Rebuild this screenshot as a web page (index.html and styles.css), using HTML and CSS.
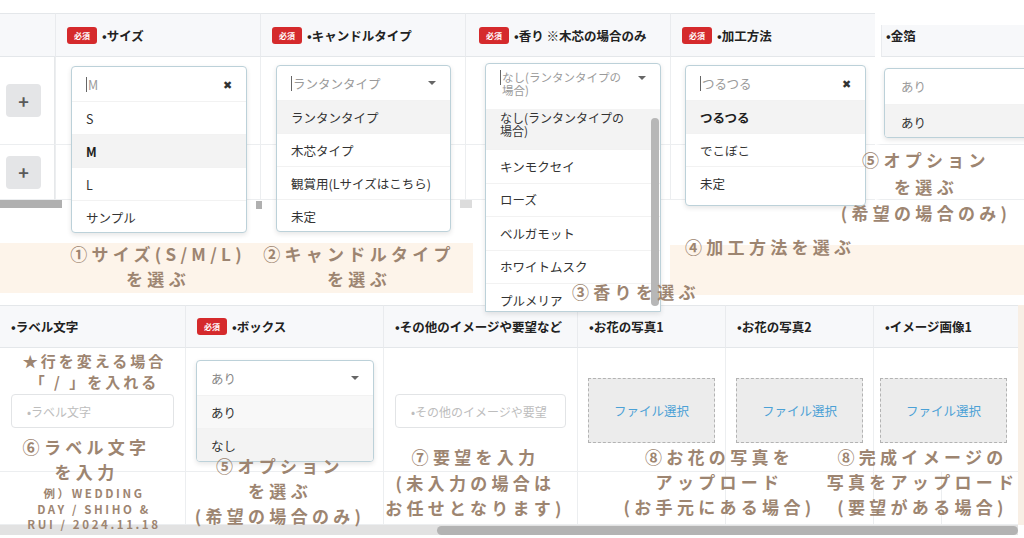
FILE: index.html
```html
<!DOCTYPE html>
<html lang="ja">
<head>
<meta charset="utf-8">
<link rel="stylesheet" href="styles.css">
</head>
<body>
<div class="canvas">
  <section class="top">
    <div class="tgrid">
      <div class="hc"></div>
      <div class="hc"><span class="req">必須</span>•サイズ</div>
      <div class="hc"><span class="req">必須</span>•キャンドルタイプ</div>
      <div class="hc hc3"><span class="req">必須</span>•香り ※木芯の場合のみ</div>
      <div class="hc"><span class="req">必須</span>•加工方法</div>
      <div class="hc hc5">•金箔</div>

      <div class="bc c0"><span class="plus">+</span></div>
      <div class="bc">
        <div class="dd dd1">
          <div class="dd-in"><i class="cur"></i>M<span class="clr">✖</span></div>
          <div class="opt">S</div>
          <div class="opt hl b">M</div>
          <div class="opt">L</div>
          <div class="opt">サンプル</div>
        </div>
      </div>
      <div class="bc">
        <div class="dd dd2">
          <div class="dd-in"><i class="cur"></i>ランタンタイプ<span class="caret"></span></div>
          <div class="opt hl">ランタンタイプ</div>
          <div class="opt">木芯タイプ</div>
          <div class="opt">観賞用(Lサイズはこちら)</div>
          <div class="opt">未定</div>
        </div>
      </div>
      <div class="bc">
        <div class="dd dd3">
          <div class="dd-in two"><i class="cur"></i><span class="tl">なし(ランタンタイプの<br>場合)</span><span class="caret"></span></div>
          <div class="list">
            <div class="opt hl two"><span class="tl">なし(ランタンタイプの<br>場合)</span></div>
            <div class="opt">キンモクセイ</div>
            <div class="opt">ローズ</div>
            <div class="opt">ベルガモット</div>
            <div class="opt">ホワイトムスク</div>
            <div class="opt">プルメリア</div>
            <span class="thumb"></span>
          </div>
        </div>
      </div>
      <div class="bc">
        <div class="dd dd4">
          <div class="dd-in"><i class="cur"></i>つるつる<span class="clr">✖</span></div>
          <div class="opt hl b">つるつる</div>
          <div class="opt">でこぼこ</div>
          <div class="opt">未定</div>
        </div>
      </div>
      <div class="bc c5">
        <div class="dd dd5">
          <div class="dd-in">あり</div>
          <div class="opt hl">あり</div>
        </div>
      </div>

      <div class="bc c0"><span class="plus">+</span></div>
      <div class="bc"></div>
      <div class="bc"></div>
      <div class="bc"></div>
      <div class="bc"></div>
      <div class="bc c5"></div>
    </div>
    <div class="sbar">
      <span class="sb sb1"></span>
      <span class="sb sb2"></span>
      <span class="sb sb3"></span>
    </div>
  </section>

  <section class="gap">
    <div class="band band1">
      <div class="note nA">①サイズ(S/M/L)<br>を選ぶ</div>
      <div class="note nB">②キャンドルタイプ<br>を選ぶ</div>
    </div>
    <div class="band band2">
      <div class="note n4">④加工方法を選ぶ</div>
    </div>
  </section>

  <section class="bottom">
    <div class="bgrid">
      <div class="hc">•ラベル文字</div>
      <div class="hc"><span class="req">必須</span>•ボックス</div>
      <div class="hc">•その他のイメージや要望など</div>
      <div class="hc">•お花の写真1</div>
      <div class="hc">•お花の写真2</div>
      <div class="hc">•イメージ画像1</div>
      <div class="strip"></div>

      <div class="bc r1"><div class="inp">•ラベル文字</div></div>
      <div class="bc r1">
        <div class="dd dd6">
          <div class="dd-in">あり<span class="caret"></span></div>
          <div class="opt lt">あり</div>
          <div class="opt hl">なし</div>
        </div>
      </div>
      <div class="bc r1"><div class="inp">•その他のイメージや要望</div></div>
      <div class="bc r1"><div class="file">ファイル選択</div></div>
      <div class="bc r1"><div class="file">ファイル選択</div></div>
      <div class="bc r1 f5"><div class="file">ファイル選択</div></div>

      <div class="bc r2"></div>
      <div class="bc r2"></div>
      <div class="bc r2"></div>
      <div class="bc r2"></div>
      <div class="bc r2"></div>
      <div class="bc r2 split"></div>
    </div>
    <div class="hscroll"><span class="hthumb"></span></div>
  </section>

  <div class="note a3">③香りを選ぶ</div>
  <div class="note a5">⑤オプション<br>を選ぶ<br>(希望の場合のみ)</div>

  <div class="note b0">★行を変える場合<br>「 / 」を入れる</div>
  <div class="note b0b">⑥ラベル文字<br>を入力</div>
  <div class="note small b0c">例）WEDDING<br>DAY / SHIHO &amp;<br>RUI / 2024.11.18</div>
  <div class="note b1">⑤オプション<br>を選ぶ<br>(希望の場合のみ)</div>
  <div class="note b2">⑦要望を入力<br>(未入力の場合は<br>お任せとなります)</div>
  <div class="note b3">⑧お花の写真を<br>アップロード<br>(お手元にある場合)</div>
  <div class="note b5">⑧完成イメージの<br>写真をアップロード<br>(要望がある場合)</div>
</div>
</body>
</html>
```

FILE: styles.css
```css
* { box-sizing: border-box; margin: 0; padding: 0; }
body {
  width: 1024px; height: 538px; overflow: hidden; background: #fff;
  font-family: "Noto Sans CJK JP", "Noto Sans", sans-serif;
  font-size: 12px; color: #333;
}
.canvas { position: relative; width: 1024px; height: 538px; overflow: hidden; }

/* ---------- top table ---------- */
.top { padding-top: 13px; }
.tgrid {
  display: grid;
  grid-template-columns: 55px 205px 205px 205px 205px 149px;
  grid-template-rows: 44px 88px 55px;
}
.hc {
  background: #f7f8fa;
  border-top: 1px solid #e4e7ea;
  border-bottom: 1px solid #e4e7ea;
  border-left: 1px solid #e9ebee;
  display: flex; align-items: center;
  padding-left: 11px;
  font-weight: bold; color: #222; font-size: 12.5px;
  white-space: nowrap;
}
.tgrid .hc:first-child { border-left: none; }
.hc3 { padding-left: 13px; }
.hc5 { margin: 12px 0 0 6px; border-top: none; padding-left: 4px; padding-bottom: 10px; }
.req {
  display: inline-flex; align-items: center; justify-content: center;
  width: 30px; height: 17px; margin-right: 5px;
  background: #d52a2c; color: #fff; border-radius: 3px;
  font-size: 8px; font-weight: bold;
}
.bc {
  position: relative;
  border-left: 1px solid #eceef0;
  border-bottom: 1px solid #eceef0;
}
.tgrid .bc.c0 { border-left: none; display: flex; align-items: center; padding-left: 6px; border-right: 1px solid #e6e8ea; }
.plus {
  width: 35px; height: 33px; border-radius: 4px; background: #e4e5e7;
  display: flex; align-items: center; justify-content: center;
  font-size: 18px; font-weight: bold; color: #5a5a5a; line-height: 1;
}
.c5 { border-left: 6px solid #fff; }

.sbar { height: 8px; display: flex; }
.sb { display: block; height: 8px; background: #b0b0b0; }
.sb1 { width: 62px; }
.sb2 { width: 6px; margin-left: 194px; margin-top: 1px; }
.sb3 { width: 12px; margin-left: 198px; background: #dcdcdc; }

/* ---------- dropdowns ---------- */
.dd {
  position: absolute; z-index: 5;
  background: #fff; border: 1px solid #bcd1d9; border-radius: 4px;
  box-shadow: 0 2px 5px rgba(0,0,0,.10);
  overflow: hidden;
}
.dd-in {
  height: 34px; display: flex; align-items: center;
  padding: 0 14px; color: #9a9a9a; font-size: 12.5px;
}
.cur { display: block; width: 1px; height: 15px; background: #666; margin-right: 1px; flex: none; }
.clr { margin-left: auto; font-size: 11px; color: #333; }
.caret {
  margin-left: auto; width: 0; height: 0; flex: none;
  border-left: 4px solid transparent; border-right: 4px solid transparent;
  border-top: 4px solid #666;
}
.opt {
  height: 33px; display: flex; align-items: center;
  padding: 0 14px; border-top: 1px solid #f2f2f2; color: #333; font-size: 12.5px;
}
.opt.hl { background: #f3f3f3; }
.opt.lt { background: #f8f8f8; }
.opt.b { font-weight: bold; color: #1e1e1e; }
.dd1 { left: 15px; top: 9px; width: 176px; height: 167px; }
.dd2 { left: 15px; top: 8px; width: 175px; height: 167px; }
.dd3 { left: 19px; top: 6px; width: 176px; height: 249px; border-bottom-left-radius: 0; border-bottom-right-radius: 0; }
.tl { display: block; font-size: 11.5px; line-height: 13px; }
.dd3 .dd-in.two { height: 45px; align-items: flex-start; padding-top: 7px; }
.dd3 .dd-in.two .cur { margin-top: -1px; }
.dd3 .dd-in.two .caret { margin-top: 5px; }
.list { position: relative; height: 203px; overflow: hidden; }
.list .opt { height: 33.5px; padding-right: 20px; }
.opt.two { height: 40px; align-items: flex-start; padding-top: 2px; border-top: none; }
.opt.two .tl { font-size: 12px; line-height: 13px; }
.thumb {
  position: absolute; right: 1px; top: 9px; width: 8px; height: 188px;
  background: #b7b7b7; border-radius: 4px;
}
.dd4 { left: 14px; top: 8px; width: 181px; height: 141px; }
.dd5 { left: 3px; top: 11px; width: 170px; height: 70px; }
.dd5 .dd-in, .dd5 .opt { height: 35px; padding-left: 16px; }
.dd6 { left: 10px; top: 12px; width: 178px; height: 102px; }
.dd6 .dd-in { color: #888; }

/* ---------- gap area ---------- */
.gap { height: 97px; display: flex; align-items: flex-start; }
.band { background: #fdf4ea; height: 50px; }
.band1 { width: 473px; margin-top: 35px; display: flex; padding-left: 62px; }
.band2 { width: 354px; margin-top: 37px; margin-left: auto; padding-left: 15px; }

/* ---------- notes ---------- */
.note {
  font-weight: bold; color: #9d8571; font-size: 17px;
  letter-spacing: 4.3px; line-height: 25px; white-space: nowrap;
}
.nA { width: 192px; text-align: center; margin-top: -2px; }
.nB { width: 210px; text-align: center; margin-top: -2px; }
.n4 { margin-top: -11px; }
.canvas > .note { position: absolute; z-index: 10; text-align: center; }
.a3 { left: 572px; top: 279px; }
.a5 { left: 826px; top: 147px; width: 200px; line-height: 26.5px; }
.canvas > .b0 { left: 2px; top: 350px; width: 185px; line-height: 21px; font-size: 15px; letter-spacing: 3px; }
.b0b { left: -6px; top: 434px; width: 185px; }
.small { font-size: 11.5px; letter-spacing: 2.6px; line-height: 15.5px; }
.b0c { left: 0; top: 486px; width: 188px; }
.b1 { left: 180px; top: 453px; width: 200px; }
.b2 { left: 373px; top: 444px; width: 205px; line-height: 25.5px; }
.b3 { left: 617px; top: 444px; width: 205px; }
.b5 { left: 820px; top: 444px; width: 205px; }

/* ---------- bottom table ---------- */
.bgrid {
  display: grid;
  grid-template-columns: 185px 198px 194px 148px 148px 145px 6px;
  grid-template-rows: 43px 124px 53px;
}
.bgrid .hc { padding-left: 11px; }
.bgrid .hc:first-child { border-left: none; }
.strip { grid-row: 1 / 4; grid-column: 7; background: #f8efe5; }
.bgrid .bc:nth-child(8), .bgrid .bc:nth-child(14) { border-left: none; }
.r1 { padding: 0 11px; }
.inp {
  margin-top: 46px; height: 34px; border: 1px solid #e2e4e6; border-radius: 4px;
  display: flex; align-items: center; padding-left: 15px;
  color: #bdbdbd; font-size: 12px;
}
.file {
  margin-top: 30px; margin-left: -1px; width: 127px; height: 65px;
  background: #ececec; border: 1.5px dashed #b3b3b3;
  display: flex; align-items: center; justify-content: center;
  color: #4ba1d6; font-size: 12.5px;
}
.f5 { padding-left: 7px; }
.split::after {
  content: ""; position: absolute; left: 67px; top: 0; bottom: 0;
  border-left: 1px solid #eceef0;
}
.hscroll { height: 10px; width: 1018px; background: #e2e2e2; position: relative; }
.hthumb {
  position: absolute; left: 437px; right: 0; top: 1px; height: 9px;
  background: #b3b3b3; border-radius: 5px;
}
```
